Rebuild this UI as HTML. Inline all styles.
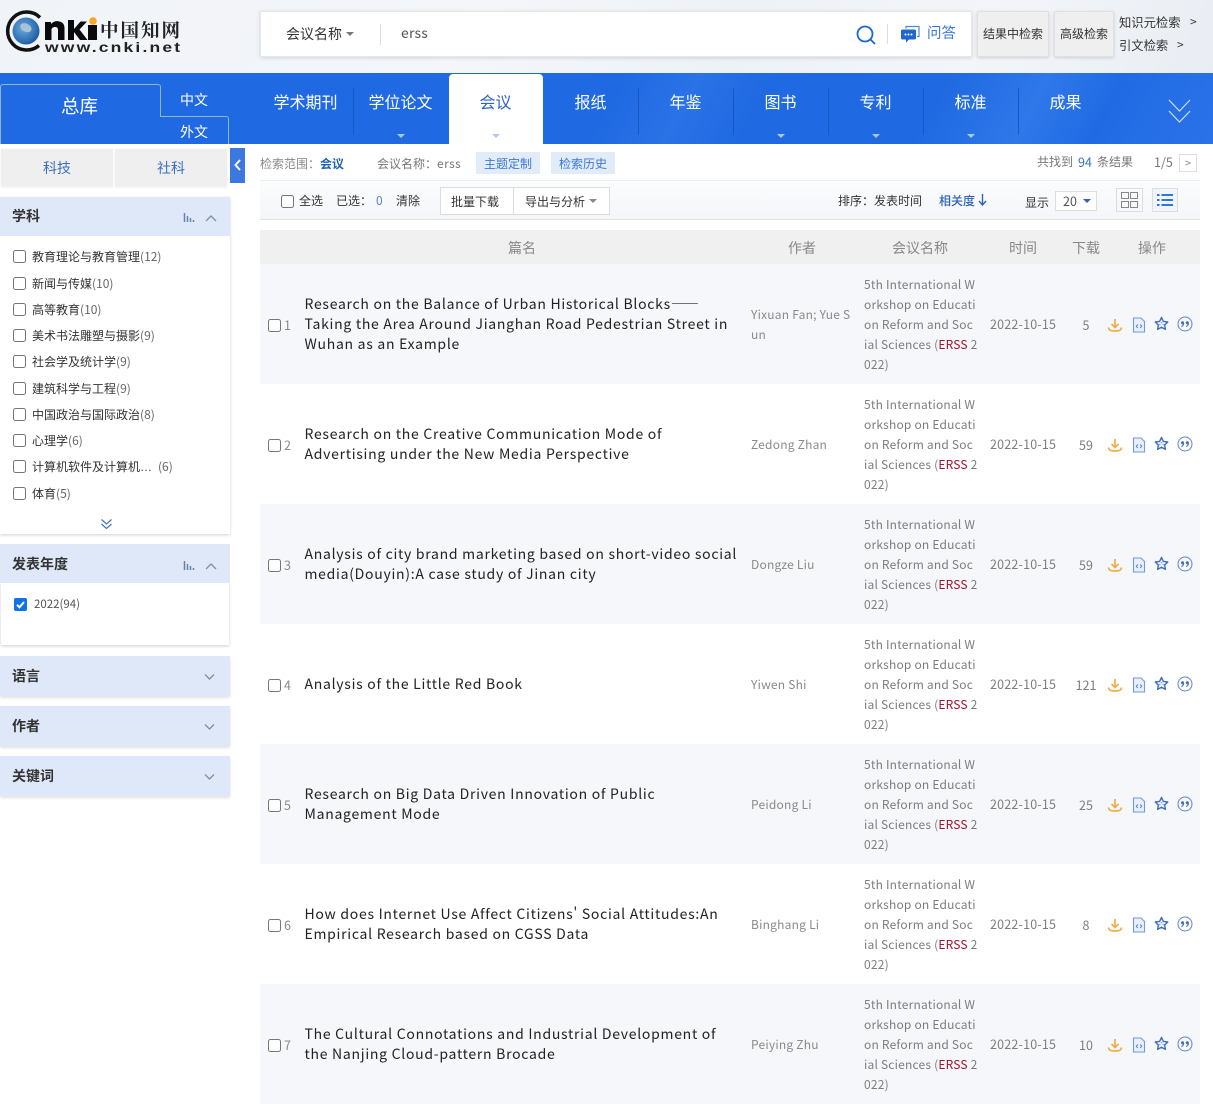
<!DOCTYPE html>
<html lang="zh"><head><meta charset="utf-8"><title>CNKI</title>
<style>
*{box-sizing:border-box}
html,body{margin:0;padding:0;background:#fff}
body{width:1213px;height:1107px;position:relative;overflow:hidden;font-family:"Noto Sans CJK SC","Liberation Sans",sans-serif;font-size:12px;color:#333}
.a{position:absolute;white-space:nowrap}
.top{left:0;top:0;width:1213px;height:73px;background:linear-gradient(115deg,#f0f3f8 0,#f4f6fa 40%,#eef1f6 60%,#f3f5f9 80%,#e9edf3 100%)}
.nav{left:0;top:73px;width:1213px;height:71px;background:linear-gradient(118deg,#1f69e2 0,#1f69e2 50%,#2a72e6 56%,#1f69e2 62%,#1f69e2 76%,#2f78ea 84%,#206be4 90%,#2a72e8 100%)}
.navt{top:89px;width:96px;margin-left:-.5px;text-align:center;color:#fff;font-size:16px;line-height:24px}
.sep{top:88px;width:1px;height:47px;background:#1658c4}
.tri{width:0;height:0;border-left:4px solid transparent;border-right:4px solid transparent;border-top:4px solid #a9c6f5}
.btn{top:11px;height:46px;background:#efefef;border:1px solid #e0e0e0;border-radius:2px;box-shadow:0 1px 3px rgba(0,0,0,.15);text-align:center;line-height:43px;color:#333}
.hd{left:0;width:230px;height:39px;background:#dfe8f8;font-weight:700;font-size:14px;line-height:41px;padding-left:12px;color:#333;box-shadow:0 2px 3px rgba(0,0,0,.12)}
.cb{width:13px;height:13px;border:1px solid #767676;border-radius:2.5px;background:#fff}
.it{left:32px;margin-top:1px;color:#333;line-height:18px}
.it i{font-style:normal;color:#666}
.row{left:260px;width:940px;height:120px}
.g{background:#f6f7fa}
.t{left:305px;margin-left:-.5px;font-size:14px;line-height:20px;letter-spacing:.72px;color:#222}
.au{left:751px;line-height:20px;color:#8a8a8a;font-size:12px;letter-spacing:.22px}
.src{left:864px;line-height:20px;color:#7d7d7d;font-size:12px;letter-spacing:.2px}
.src b{font-weight:400;color:#a3112a}
.d{left:990px;margin-top:-1px;line-height:20px;color:#7d7d7d;font-size:12.5px;letter-spacing:.2px}
.n{left:1066px;margin-top:-1px;width:40px;text-align:center;color:#7d7d7d;font-size:12.5px;line-height:20px}
.num{left:284px;color:#8a8a8a;font-size:12.5px;line-height:20px}
.th{top:239px;color:#888;font-size:14px;line-height:18px}
.ic{position:absolute}
</style></head><body>
<svg width="0" height="0" style="position:absolute">
<symbol id="dl" viewBox="0 0 16 16"><path d="M8 2v8M4.500 7 8 10.500 11.500 7" fill="none" stroke="#f2ac45" stroke-width="1.700"/><path d="M1.500 10.500c.5 3 2.500 3.500 6.500 3.500s6-.5 6.500-3.500" fill="none" stroke="#f2ac45" stroke-width="1.700"/></symbol>
<symbol id="doc" viewBox="0 0 16 16"><path d="M2.500 1h7.500l3.500 3.500V15h-11z" fill="#e8f0fb" stroke="#6f9ad8" stroke-width="1.100"/><path d="M6.800 7.500 5.300 9.300l1.500 1.700M9.200 7.500l1.500 1.800-1.500 1.700" fill="none" stroke="#5b86c9"/></symbol>
<symbol id="star" viewBox="0 0 16 16"><path d="M8 1.500 10 5.800l4.700.6-3.400 3.200.9 4.700L8 12l-4.200 2.300.9-4.700L1.300 6.400 6 5.800z" fill="#f2f6fc" stroke="#3f6fbb" stroke-width="1.500" stroke-linejoin="round"/><circle cx="8" cy="7" r=".8" fill="#7fa0d6"/><circle cx="6.200" cy="9" r=".8" fill="#7fa0d6"/><circle cx="9.800" cy="9" r=".8" fill="#7fa0d6"/></symbol>
<symbol id="qu" viewBox="0 0 16 16"><circle cx="8" cy="8" r="7" fill="none" stroke="#5b86c9" stroke-width="1"/><circle cx="5.500" cy="6.800" r="1.500" fill="#3f6fbb"/><circle cx="10.300" cy="6.800" r="1.500" fill="#3f6fbb"/><path d="M6.600 7c0 1.800-.8 3-2.200 3.500M11.400 7c0 1.800-.8 3-2.200 3.500" fill="none" stroke="#3f6fbb" stroke-width="1.100"/></symbol>
</svg>

<div class="a top"></div>
<!-- logo -->
<svg class="a" style="left:3px;top:10px" width="180" height="46" viewBox="0 0 180 46">
<defs><radialGradient id="gl" cx=".4" cy=".4" r=".7"><stop offset="0" stop-color="#6fa8dc"/><stop offset=".7" stop-color="#2c6fb3"/><stop offset="1" stop-color="#1c4f8c"/></radialGradient></defs>
<circle cx="23" cy="21" r="13.500" fill="url(#gl)"/>
<path d="M18 14c4-2 8 0 10 3 2 4-2 6-5 5-4-1-7-4-5-8z" fill="#a8c3d8"/>
<path d="M37 7.500A19 19 0 1 0 36 35.500" fill="none" stroke="#111" stroke-width="3.500"/>
<path d="M42 12h6v2c2-2 4-3 7-2.800 4 .3 6.500 2.500 6.500 7V30H55V20c0-2-1-3-3-3s-3.500 1-3.500 3v10H42zM65 10h6v9l6.500-7.500H84L76.500 19.500 84.500 30h-7.500L71 22v8h-6zM85 15h9v15h-9z" fill="#0a0a0a"/>
<circle cx="90" cy="11" r="3.800" fill="#f6a821"/>
<text x="97" y="27" font-family="'Noto Serif CJK SC',serif" font-weight="700" font-size="18.500" fill="#222" textLength="80" lengthAdjust="spacing">中国知网</text>
<g transform="translate(42 42) scale(1.25 1)"><text x="0" y="0" font-family="'Liberation Sans',sans-serif" font-weight="700" font-size="14" letter-spacing="1.750" fill="#222">www.cnki.net</text></g>
</svg>
<!-- search box -->
<div class="a" style="left:260px;top:11px;width:712px;height:46px;background:#fff;border:1px solid #e4e7ec;box-shadow:0 1px 4px rgba(0,0,0,.14)"></div>
<div class="a" style="left:286px;top:24px;font-size:14px;line-height:20px;color:#333">会议名称</div>
<div class="a tri" style="left:346px;top:32px;border-top-color:#777"></div>
<div class="a" style="left:380px;top:24px;width:1px;height:21px;background:#ddd"></div>
<div class="a" style="left:401px;top:23px;font-size:14px;line-height:20px;color:#555;letter-spacing:.2px">erss</div>
<svg class="a" style="left:855px;top:24px" width="22" height="22" viewBox="0 0 22 22"><circle cx="10" cy="10" r="7.500" fill="none" stroke="#1b66d8" stroke-width="1.800"/><path d="M15.500 15.500 20 20" stroke="#1b66d8" stroke-width="1.800"/></svg>
<div class="a" style="left:887px;top:24px;width:1px;height:20px;background:#ddd"></div>
<svg class="a" style="left:900px;top:25px" width="20" height="19" viewBox="0 0 20 19"><path d="M6 3.500V1.500h13v10h-2" fill="none" stroke="#4c87e0" stroke-width="1.200"/><path d="M2.500 4.500h12a1.500 1.500 0 0 1 1.500 1.500v7a1.500 1.500 0 0 1-1.500 1.500H9l-3 3v-3H2.500A1.500 1.500 0 0 1 1 13V6a1.500 1.500 0 0 1 1.500-1.500z" fill="#2067cf"/><circle cx="5.500" cy="9.500" r="1" fill="#fff"/><circle cx="8.500" cy="9.500" r="1" fill="#fff"/><circle cx="11.500" cy="9.500" r="1" fill="#fff"/></svg>
<div class="a" style="left:927px;top:23px;font-size:14.500px;line-height:20px;color:#3a78d8">问答</div>
<div class="a btn" style="left:977px;width:72px">结果中检索</div>
<div class="a btn" style="left:1054px;width:60px">高级检索</div>
<div class="a" style="left:1119px;top:13px;line-height:18px;color:#333;font-size:12.300px">知识元检索</div>
<div class="a" style="left:1190px;top:13px;line-height:18px;color:#333">&gt;</div>
<div class="a" style="left:1119px;top:36px;line-height:18px;color:#333;font-size:12.300px">引文检索</div>
<div class="a" style="left:1177px;top:36px;line-height:18px;color:#333">&gt;</div>

<!-- nav -->
<div class="a nav"></div>
<div class="a" style="left:0;top:84px;width:161px;height:60px;background:#1f69e2;border:1px solid #8db5f2;border-bottom:0;border-radius:3px 3px 0 0"></div>
<div class="a" style="left:160px;top:116px;width:69px;height:28px;background:#1f69e2;border:1px solid #8db5f2;border-width:1px 1px 0 0;border-radius:0 3px 0 0"></div>
<div class="a" style="left:61px;top:94px;color:#fff;font-size:18.500px;line-height:24px">总库</div>
<div class="a" style="left:180px;top:90px;color:#fff;font-size:14px;line-height:20px">中文</div>
<div class="a" style="left:180px;top:122px;color:#fff;font-size:14px;line-height:20px">外文</div>
<div class="a navt" style="left:258px">学术期刊</div>
<div class="a sep" style="left:353px"></div>
<div class="a navt" style="left:353px">学位论文</div>
<div class="a tri" style="left:397px;top:134px"></div>
<div class="a" style="left:449px;top:74px;width:94px;height:70px;background:#fff;border-radius:4px 4px 0 0"></div>
<div class="a navt" style="left:448px;color:#2f62c4">会议</div>
<div class="a tri" style="left:492px;top:134px"></div>
<div class="a navt" style="left:543px">报纸</div>
<div class="a sep" style="left:638px"></div>
<div class="a navt" style="left:638px">年鉴</div>
<div class="a sep" style="left:733px"></div>
<div class="a navt" style="left:733px">图书</div>
<div class="a tri" style="left:777px;top:134px"></div>
<div class="a sep" style="left:828px"></div>
<div class="a navt" style="left:828px">专利</div>
<div class="a tri" style="left:872px;top:134px"></div>
<div class="a sep" style="left:923px"></div>
<div class="a navt" style="left:923px">标准</div>
<div class="a tri" style="left:967px;top:134px"></div>
<div class="a sep" style="left:1018px"></div>
<div class="a navt" style="left:1018px">成果</div>
<svg class="a" style="left:1167px;top:98px" width="25" height="26" viewBox="0 0 25 26"><path d="M2 2 12.500 13 23 2M2 13 12.500 24 23 13" fill="none" stroke="#cfe0fa" stroke-width="1.200"/></svg>

<!-- left -->
<div class="a" style="left:1px;top:149px;width:112px;height:37px;background:#efefef;color:#3a6fc4;font-size:14px;line-height:39px;text-align:center;box-shadow:0 2px 2px rgba(0,0,0,.06)">科技</div>
<div class="a" style="left:115px;top:149px;width:112px;height:37px;background:#efefef;color:#3a6fc4;font-size:14px;line-height:39px;text-align:center;box-shadow:0 2px 2px rgba(0,0,0,.06)">社科</div>
<div class="a" style="left:230px;top:148px;width:15px;height:35px;background:#3b78e0"></div>
<svg class="a" style="left:232px;top:158px" width="11" height="14" viewBox="0 0 11 14"><path d="M8 2 3.500 7 8 12" fill="none" stroke="#fff" stroke-width="2"/></svg>

<div class="a" style="left:0;top:197px;width:230px;height:337px;background:#fff;box-shadow:0 1px 3px rgba(0,0,0,.18)"></div>
<div class="a hd" style="top:197px;box-shadow:none;line-height:39px">学科</div>
<svg class="a" style="left:183px;top:211px" width="34" height="13" viewBox="0 0 34 13"><path d="M1.500 2v9M4.500 5v6M7.500 7v4M10.500 9v2" stroke="#6683ad" stroke-width="1.500"/><path d="M23 10l5-5 5 5" fill="none" stroke="#7f92ad" stroke-width="1.400"/></svg>
<div class="a cb" style="left:13px;top:250px"></div><div class="a it" style="top:247px">教育理论与教育管理<i>(12)</i></div>
<div class="a cb" style="left:13px;top:277px"></div><div class="a it" style="top:274px">新闻与传媒<i>(10)</i></div>
<div class="a cb" style="left:13px;top:303px"></div><div class="a it" style="top:300px">高等教育<i>(10)</i></div>
<div class="a cb" style="left:13px;top:329px"></div><div class="a it" style="top:326px">美术书法雕塑与摄影<i>(9)</i></div>
<div class="a cb" style="left:13px;top:355px"></div><div class="a it" style="top:352px">社会学及统计学<i>(9)</i></div>
<div class="a cb" style="left:13px;top:382px"></div><div class="a it" style="top:379px">建筑科学与工程<i>(9)</i></div>
<div class="a cb" style="left:13px;top:408px"></div><div class="a it" style="top:405px">中国政治与国际政治<i>(8)</i></div>
<div class="a cb" style="left:13px;top:434px"></div><div class="a it" style="top:431px">心理学<i>(6)</i></div>
<div class="a cb" style="left:13px;top:460px"></div><div class="a it" style="top:457px">计算机软件及计算机<span style="font-family:'Liberation Sans',sans-serif">…</span></div><div class="a it" style="top:457px;left:158px"><i>(6)</i></div>
<div class="a cb" style="left:13px;top:487px"></div><div class="a it" style="top:484px">体育<i>(5)</i></div>
<svg class="a" style="left:100px;top:518px" width="13" height="12" viewBox="0 0 13 12"><path d="M1.500 1.500 6.500 6l5-4.500M1.500 6 6.500 10.500l5-4.500" fill="none" stroke="#3f72c4" stroke-width="1.200"/></svg>

<div class="a" style="left:1px;top:583px;width:228px;height:62px;background:#fff;box-shadow:0 1px 3px rgba(0,0,0,.2)"></div>
<div class="a hd" style="top:544px;box-shadow:none">发表年度</div>
<svg class="a" style="left:183px;top:559px" width="34" height="13" viewBox="0 0 34 13"><path d="M1.500 2v9M4.500 5v6M7.500 7v4M10.500 9v2" stroke="#6683ad" stroke-width="1.500"/><path d="M23 10l5-5 5 5" fill="none" stroke="#7f92ad" stroke-width="1.400"/></svg>
<svg class="a" style="left:14px;top:598px" width="13" height="13" viewBox="0 0 13 13"><rect width="13" height="13" rx="2" fill="#0f72e8"/><path d="M3 6.800 5.500 9.300 10 4" fill="none" stroke="#fff" stroke-width="2"/></svg>
<div class="a" style="left:34px;top:596px;font-size:11.500px;line-height:17px;color:#555">2022(94)</div>

<div class="a hd" style="top:656px;height:40px">语言</div>
<svg class="a" style="left:203px;top:673px" width="13" height="8" viewBox="0 0 13 8"><path d="M2 1.500 6.500 6 11 1.500" fill="none" stroke="#7f92ad" stroke-width="1.400"/></svg>
<div class="a hd" style="top:706px;height:40px">作者</div>
<svg class="a" style="left:203px;top:723px" width="13" height="8" viewBox="0 0 13 8"><path d="M2 1.500 6.500 6 11 1.500" fill="none" stroke="#7f92ad" stroke-width="1.400"/></svg>
<div class="a hd" style="top:756px;height:40px">关键词</div>
<svg class="a" style="left:203px;top:773px" width="13" height="8" viewBox="0 0 13 8"><path d="M2 1.500 6.500 6 11 1.500" fill="none" stroke="#7f92ad" stroke-width="1.400"/></svg>

<!-- info line -->
<div class="a" style="left:260px;top:155px;line-height:18px;color:#888">检索范围：<b style="color:#1f62b8">会议</b></div>
<div class="a" style="left:377px;top:155px;line-height:18px;color:#777">会议名称：<span style="letter-spacing:.4px">erss</span></div>
<div class="a" style="left:476px;top:152px;width:64px;height:22px;background:#e2ebf8;color:#3a78d8;line-height:23px;text-align:center">主题定制</div>
<div class="a" style="left:551px;top:152px;width:64px;height:22px;background:#e2ebf8;color:#3a78d8;line-height:23px;text-align:center">检索历史</div>
<div class="a" style="left:1037px;top:153px;line-height:18px;color:#777">共找到</div>
<div class="a" style="left:1078px;top:153px;line-height:18px;color:#3a6fc4;font-size:12.500px">94</div>
<div class="a" style="left:1097px;top:153px;line-height:18px;color:#777">条结果</div>
<div class="a" style="left:1154px;top:153px;line-height:18px;color:#777;font-size:12.500px">1/5</div>
<div class="a" style="left:1179px;top:154px;width:18px;height:18px;border:1px solid #ddd;color:#888;font-size:11px;line-height:17px;text-align:center">&gt;</div>

<!-- toolbar -->
<div class="a" style="left:260px;top:180px;width:940px;height:40px;background:linear-gradient(#fbfcfe,#f5f6f9);border-top:1px solid #eceef1;border-bottom:1px solid #dfe1e5"></div>
<div class="a cb" style="left:281px;top:195px"></div>
<div class="a" style="left:299px;top:192px;line-height:18px">全选</div>
<div class="a" style="left:336px;top:192px;line-height:18px">已选：</div>
<div class="a" style="left:376px;top:192px;line-height:18px;color:#5d83bd">0</div>
<div class="a" style="left:396px;top:192px;line-height:18px">清除</div>
<div class="a" style="left:440px;top:187px;width:74px;height:28px;background:#fff;border:1px solid #ddd;line-height:27px;padding-left:10px">批量下载</div>
<div class="a" style="left:513px;top:187px;width:97px;height:28px;background:#fff;border:1px solid #ddd;line-height:27px;padding-left:11px">导出与分析</div>
<div class="a tri" style="left:589px;top:199px;border-top-color:#888"></div>
<div class="a" style="left:838px;top:192px;line-height:18px">排序：发表时间</div>
<div class="a" style="left:939px;top:192px;line-height:18px;color:#2f62b8;font-weight:500">相关度</div>
<svg class="a" style="left:978px;top:194px" width="9" height="12" viewBox="0 0 9 12"><path d="M4.500 0v10M1 7l3.500 4L8 7" fill="none" stroke="#2f62b8" stroke-width="1.400"/></svg>
<div class="a" style="left:1025px;top:194px;line-height:18px">显示</div>
<div class="a" style="left:1055px;top:191px;width:42px;height:20px;background:#fff;border:1px solid #ddd;line-height:18px;padding-left:7px;color:#555;font-size:12.500px">20</div>
<div class="a tri" style="left:1083px;top:199px;border-top-color:#2f62b8"></div>
<div class="a" style="left:1116px;top:188px;width:27px;height:24px;border:1px solid #ddd"></div>
<svg class="a" style="left:1121px;top:192px" width="17" height="16" viewBox="0 0 17 16"><g fill="none" stroke="#888"><rect x=".5" y=".5" width="7" height="6"/><rect x="9.500" y=".5" width="7" height="6"/><rect x=".5" y="9.500" width="7" height="6"/><rect x="9.500" y="9.500" width="7" height="6"/></g></svg>
<div class="a" style="left:1152px;top:188px;width:26px;height:24px;border:1px solid #ddd;background:#f0f5fc"></div>
<svg class="a" style="left:1157px;top:193px" width="16" height="14" viewBox="0 0 16 14"><g fill="#2f74dc"><rect y="1" width="2.500" height="2"/><rect y="6" width="2.500" height="2"/><rect y="11" width="2.500" height="2"/><rect x="4.500" y="1" width="11.500" height="2"/><rect x="4.500" y="6" width="11.500" height="2"/><rect x="4.500" y="11" width="11.500" height="2"/></g></svg>

<!-- table head -->
<div class="a" style="left:260px;top:230px;width:940px;height:34px;background:#f0f0f1"></div>
<div class="a th" style="left:508px">篇名</div>
<div class="a th" style="left:788px">作者</div>
<div class="a th" style="left:892px">会议名称</div>
<div class="a th" style="left:1009px">时间</div>
<div class="a th" style="left:1072px">下载</div>
<div class="a th" style="left:1138px">操作</div>

<!-- row 1 -->
<div class="a row g" style="top:264px"></div>
<div class="a cb" style="left:268px;top:319px"></div><div class="a num" style="top:315px">1</div>
<div class="a t" style="top:294px">Research on the Balance of Urban Historical Blocks——<br>Taking the Area Around Jianghan Road Pedestrian Street in<br>Wuhan as an Example</div>
<div class="a au" style="top:305px">Yixuan Fan; Yue S<br>un</div>
<div class="a src" style="top:275px">5th International W<br>orkshop on Educati<br>on Reform and Soc<br>ial Sciences (<b>ERSS</b> 2<br>022)</div>
<div class="a d" style="top:315px">2022-10-15</div><div class="a n" style="top:316px">5</div>
<svg class="ic" style="left:1107px;top:317px" width="16" height="16"><use href="#dl"/></svg><svg class="ic" style="left:1131px;top:317px" width="16" height="16"><use href="#doc"/></svg><svg class="ic" style="left:1154px;top:316px" width="15" height="15"><use href="#star"/></svg><svg class="ic" style="left:1177px;top:316px" width="16" height="16"><use href="#qu"/></svg>

<!-- row 2 -->
<div class="a cb" style="left:268px;top:439px"></div><div class="a num" style="top:435px">2</div>
<div class="a t" style="top:424px">Research on the Creative Communication Mode of<br>Advertising under the New Media Perspective</div>
<div class="a au" style="top:435px">Zedong Zhan</div>
<div class="a src" style="top:395px">5th International W<br>orkshop on Educati<br>on Reform and Soc<br>ial Sciences (<b>ERSS</b> 2<br>022)</div>
<div class="a d" style="top:435px">2022-10-15</div><div class="a n" style="top:436px">59</div>
<svg class="ic" style="left:1107px;top:437px" width="16" height="16"><use href="#dl"/></svg><svg class="ic" style="left:1131px;top:437px" width="16" height="16"><use href="#doc"/></svg><svg class="ic" style="left:1154px;top:436px" width="15" height="15"><use href="#star"/></svg><svg class="ic" style="left:1177px;top:436px" width="16" height="16"><use href="#qu"/></svg>

<!-- row 3 -->
<div class="a row g" style="top:504px"></div>
<div class="a cb" style="left:268px;top:559px"></div><div class="a num" style="top:555px">3</div>
<div class="a t" style="top:544px">Analysis of city brand marketing based on short-video social<br>media(Douyin):A case study of Jinan city</div>
<div class="a au" style="top:555px">Dongze Liu</div>
<div class="a src" style="top:515px">5th International W<br>orkshop on Educati<br>on Reform and Soc<br>ial Sciences (<b>ERSS</b> 2<br>022)</div>
<div class="a d" style="top:555px">2022-10-15</div><div class="a n" style="top:556px">59</div>
<svg class="ic" style="left:1107px;top:557px" width="16" height="16"><use href="#dl"/></svg><svg class="ic" style="left:1131px;top:557px" width="16" height="16"><use href="#doc"/></svg><svg class="ic" style="left:1154px;top:556px" width="15" height="15"><use href="#star"/></svg><svg class="ic" style="left:1177px;top:556px" width="16" height="16"><use href="#qu"/></svg>

<!-- row 4 -->
<div class="a cb" style="left:268px;top:679px"></div><div class="a num" style="top:675px">4</div>
<div class="a t" style="top:674px">Analysis of the Little Red Book</div>
<div class="a au" style="top:675px">Yiwen Shi</div>
<div class="a src" style="top:635px">5th International W<br>orkshop on Educati<br>on Reform and Soc<br>ial Sciences (<b>ERSS</b> 2<br>022)</div>
<div class="a d" style="top:675px">2022-10-15</div><div class="a n" style="top:676px">121</div>
<svg class="ic" style="left:1107px;top:677px" width="16" height="16"><use href="#dl"/></svg><svg class="ic" style="left:1131px;top:677px" width="16" height="16"><use href="#doc"/></svg><svg class="ic" style="left:1154px;top:676px" width="15" height="15"><use href="#star"/></svg><svg class="ic" style="left:1177px;top:676px" width="16" height="16"><use href="#qu"/></svg>

<!-- row 5 -->
<div class="a row g" style="top:744px"></div>
<div class="a cb" style="left:268px;top:799px"></div><div class="a num" style="top:795px">5</div>
<div class="a t" style="top:784px">Research on Big Data Driven Innovation of Public<br>Management Mode</div>
<div class="a au" style="top:795px">Peidong Li</div>
<div class="a src" style="top:755px">5th International W<br>orkshop on Educati<br>on Reform and Soc<br>ial Sciences (<b>ERSS</b> 2<br>022)</div>
<div class="a d" style="top:795px">2022-10-15</div><div class="a n" style="top:796px">25</div>
<svg class="ic" style="left:1107px;top:797px" width="16" height="16"><use href="#dl"/></svg><svg class="ic" style="left:1131px;top:797px" width="16" height="16"><use href="#doc"/></svg><svg class="ic" style="left:1154px;top:796px" width="15" height="15"><use href="#star"/></svg><svg class="ic" style="left:1177px;top:796px" width="16" height="16"><use href="#qu"/></svg>

<!-- row 6 -->
<div class="a cb" style="left:268px;top:919px"></div><div class="a num" style="top:915px">6</div>
<div class="a t" style="top:904px">How does Internet Use Affect Citizens' Social Attitudes:An<br>Empirical Research based on CGSS Data</div>
<div class="a au" style="top:915px">Binghang Li</div>
<div class="a src" style="top:875px">5th International W<br>orkshop on Educati<br>on Reform and Soc<br>ial Sciences (<b>ERSS</b> 2<br>022)</div>
<div class="a d" style="top:915px">2022-10-15</div><div class="a n" style="top:916px">8</div>
<svg class="ic" style="left:1107px;top:917px" width="16" height="16"><use href="#dl"/></svg><svg class="ic" style="left:1131px;top:917px" width="16" height="16"><use href="#doc"/></svg><svg class="ic" style="left:1154px;top:916px" width="15" height="15"><use href="#star"/></svg><svg class="ic" style="left:1177px;top:916px" width="16" height="16"><use href="#qu"/></svg>

<!-- row 7 -->
<div class="a row g" style="top:984px"></div>
<div class="a cb" style="left:268px;top:1039px"></div><div class="a num" style="top:1035px">7</div>
<div class="a t" style="top:1024px">The Cultural Connotations and Industrial Development of<br>the Nanjing Cloud-pattern Brocade</div>
<div class="a au" style="top:1035px">Peiying Zhu</div>
<div class="a src" style="top:995px">5th International W<br>orkshop on Educati<br>on Reform and Soc<br>ial Sciences (<b>ERSS</b> 2<br>022)</div>
<div class="a d" style="top:1035px">2022-10-15</div><div class="a n" style="top:1036px">10</div>
<svg class="ic" style="left:1107px;top:1037px" width="16" height="16"><use href="#dl"/></svg><svg class="ic" style="left:1131px;top:1037px" width="16" height="16"><use href="#doc"/></svg><svg class="ic" style="left:1154px;top:1036px" width="15" height="15"><use href="#star"/></svg><svg class="ic" style="left:1177px;top:1036px" width="16" height="16"><use href="#qu"/></svg>
</body></html>
